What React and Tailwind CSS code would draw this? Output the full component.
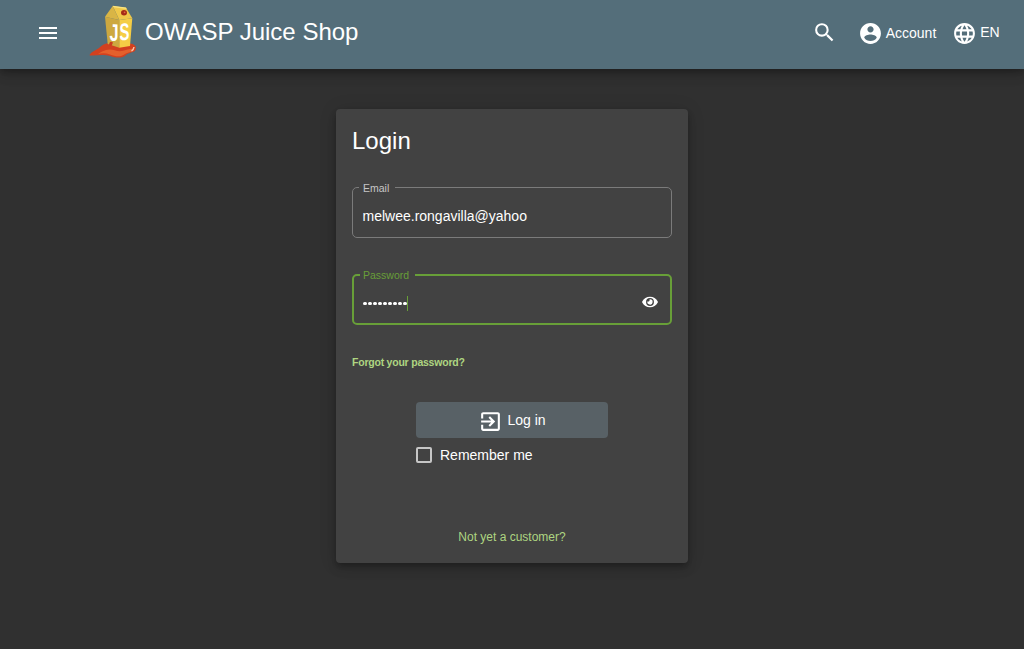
import React from "react";

const MENU = "M3 18h18v-2H3v2zm0-5h18v-2H3v2zm0-7v2h18V6H3z";
const SEARCH = "M15.5 14h-.79l-.28-.27A6.471 6.471 0 0 0 16 9.5 6.5 6.5 0 1 0 9.5 16c1.61 0 3.09-.59 4.23-1.57l.27.28v.79l5 4.99L20.49 19l-4.99-5zm-6 0C7.01 14 5 11.99 5 9.5S7.01 5 9.5 5 14 7.01 14 9.5 11.99 14 9.5 14z";
const ACCOUNT = "M12 2C6.48 2 2 6.48 2 12s4.48 10 10 10 10-4.48 10-10S17.52 2 12 2zm0 3c1.66 0 3 1.34 3 3s-1.34 3-3 3-3-1.34-3-3 1.34-3 3-3zm0 14.2c-2.5 0-4.71-1.28-6-3.22.03-1.99 4-3.08 6-3.08 1.99 0 5.97 1.09 6 3.08-1.29 1.94-3.5 3.22-6 3.22z";
const GLOBE = "M11.99 2C6.47 2 2 6.48 2 12s4.47 10 9.99 10C17.52 22 22 17.52 22 12S17.52 2 11.99 2zm6.93 6h-2.95c-.32-1.25-.78-2.45-1.38-3.56 1.84.63 3.37 1.91 4.33 3.56zM12 4.04c.83 1.2 1.48 2.53 1.91 3.96h-3.82c.43-1.43 1.08-2.76 1.91-3.96zM4.26 14C4.1 13.36 4 12.69 4 12s.1-1.36.26-2h3.38c-.08.66-.14 1.32-.14 2s.06 1.34.14 2H4.26zm.82 2h2.95c.32 1.25.78 2.45 1.38 3.56-1.84-.63-3.37-1.9-4.33-3.56zm2.95-8H5.08c.96-1.66 2.49-2.93 4.33-3.56C8.81 5.55 8.35 6.75 8.03 8zM12 19.96c-.83-1.2-1.48-2.53-1.91-3.96h3.82c-.43 1.43-1.08 2.76-1.91 3.96zM14.34 14H9.66c-.09-.66-.16-1.32-.16-2s.07-1.35.16-2h4.68c.09.65.16 1.32.16 2s-.07 1.34-.16 2zm.25 5.56c.6-1.11 1.06-2.31 1.38-3.56h2.95c-.96 1.65-2.49 2.93-4.33 3.56zM16.36 14c.08-.66.14-1.32.14-2s-.06-1.34-.14-2h3.38c.16.64.26 1.31.26 2s-.1 1.36-.26 2h-3.38z";
const EXIT = "M10.09 15.59L11.5 17l5-5-5-5-1.41 1.41L12.67 11H3v2h9.67l-2.58 2.59zM19 3H5c-1.11 0-2 .9-2 2v4h2V5h14v14H5v-4H3v4c0 1.1.89 2 2 2h14c1.1 0 2-.9 2-2V5c0-1.1-.9-2-2-2z";
const EYE = "M572.52 241.4C518.29 135.59 410.93 64 288 64S57.68 135.64 3.48 241.41a32.35 32.35 0 0 0 0 29.19C57.71 376.41 165.07 448 288 448s230.32-71.64 284.52-177.41a32.35 32.35 0 0 0 0-29.19zM288 400a144 144 0 1 1 144-144 143.93 143.93 0 0 1-144 144zm0-240a95.31 95.31 0 0 0-25.31 3.79 47.85 47.85 0 0 1-66.9 66.9A95.78 95.78 0 1 0 288 160z";

function Icon({ d, className = "size-6", viewBox = "0 0 24 24" }) {
  return (
    <svg viewBox={viewBox} fill="currentColor" className={`shrink-0 ${className}`} aria-hidden="true">
      <path d={d} />
    </svg>
  );
}

function JuiceLogo() {
  return (
    <svg viewBox="0 0 48 54" className="h-[54px] w-12 shrink-0" aria-hidden="true">
      <path d="M0.500 50C3 46 7 45.500 10 43C13 40 16 38.500 20 38L41 38.500C46 39 48 42 46.500 45C45 48 40 47 37 50C33 53.500 28 53 21 51C13 49 7 51 1 50.500Z" fill="#d2401f" />
      <path d="M17 45C23 43 27 47 33 46C38 45 42 43 45 44C44 47 40 47 36 49C31 53 26 51 21 49.500C17 48 13 48 9 49Q13 46 17 45Z" fill="#e4602c" />
      <path d="M42.500 46Q44.500 45 45 42" stroke="#f8c4ab" strokeWidth="1.500" fill="none" />
      <path d="M16 11.700L30.300 15V42.700L18.700 39Z" fill="#cda840" />
      <path d="M30.300 15L43.300 13.300L41 41L30.300 42.700Z" fill="#f5cd45" />
      <path d="M23.700 1L37 2.700L43.300 13.300L30.300 15Z" fill="#efc84a" />
      <path d="M23.700 1L16 11.700L30.300 15Z" fill="#d9b545" />
      <path d="M23.700 0.800L37 2.500L37.700 4L24.500 2.300Z" fill="#fae37f" />
      <ellipse cx="35" cy="7.700" rx="3" ry="2.700" fill="#a52a17" />
      <circle cx="35.600" cy="7.300" r="0.900" fill="#de6642" />
      <path d="M20 40Q20.500 35 24 37.500L22.500 41Z" fill="#cb3d20" />
      <text transform="matrix(0.680 0.040 0 1 20.600 35.500)" fontFamily="Liberation Sans, sans-serif" fontWeight="bold" fontSize="24" fill="#fff">J</text>
      <text transform="matrix(0.620 -0.050 0 1 30.500 35.500)" fontFamily="Liberation Sans, sans-serif" fontWeight="bold" fontSize="24" fill="#fff">S</text>
    </svg>
  );
}

export default function App() {
  return (
    <div className="flex h-screen flex-col overflow-hidden bg-[#303030] font-['Liberation_Sans',Arial,sans-serif] text-sm text-white">
      <header className="z-10 flex h-[69px] shrink-0 items-start bg-[#546e7a] shadow-[0_3px_5px_-1px_rgba(0,0,0,0.2),0_6px_10px_rgba(0,0,0,0.14),0_1px_18px_rgba(0,0,0,0.12)]">
        <button className="mt-[21px] ml-9" aria-label="Open menu"><Icon d={MENU} /></button>
        <div className="mt-[5px] ml-[29px]"><JuiceLogo /></div>
        <h1 className="mt-4 ml-2 text-2xl leading-8 whitespace-nowrap">OWASP Juice Shop</h1>
        <div className="mt-5 ml-auto flex h-6 items-center pr-6">
          <button aria-label="Search"><Icon d={SEARCH} className="size-[25px]" /></button>
          <button className="ml-[21px] flex items-center gap-[2px]">
            <Icon d={ACCOUNT} className="mt-[2px] size-[25px]" />
            <span className="mt-[2px] w-[52px] whitespace-nowrap">Account</span>
          </button>
          <button className="ml-[15px] flex items-center gap-[3px]">
            <Icon d={GLOBE} className="mt-[2px] size-[25px]" />
            <span className="w-5">EN</span>
          </button>
        </div>
      </header>

      <main className="mx-auto mt-10 flex h-[454px] w-[352px] flex-col rounded bg-[#424242] px-4 shadow-[0_3px_5px_-1px_rgba(0,0,0,0.2),0_6px_10px_rgba(0,0,0,0.14),0_1px_18px_rgba(0,0,0,0.12)]">
        <h2 className="mt-4 text-2xl leading-8">Login</h2>

        <fieldset className="mt-6 h-[57px] min-w-0 rounded-[5px] border border-[#7b7b7b] px-[6px]">
          <legend className="h-[13px] w-9 px-1 text-[10.5px] leading-[15px] text-[#c6c6c6]">Email</legend>
          <div className="mt-3 px-[3.5px] leading-5">melwee.rongavilla@yahoo</div>
        </fieldset>

        <fieldset className="mt-[30px] h-[57px] min-w-0 rounded-[5px] border-2 border-[#689f38] px-[6px]">
          <legend className="h-[14px] w-[55px] px-[3px] text-[10.5px] leading-[15px] text-[#689f38]">Password</legend>
          <div className="mt-[11px] flex h-5 items-center pr-[6px] pl-[3px]">
            <span className="flex gap-px" aria-label="Password entered">
              {Array.from({ length: 9 }, (_, i) => (
                <span key={i} className="h-[3px] w-1 rounded-full bg-white" />
              ))}
            </span>
            <span className="h-[15px] w-px bg-[#689f38]" />
            <Icon d={EYE} viewBox="0 0 576 512" className="mb-[2px] ml-auto h-[14px] w-4" />
          </div>
        </fieldset>

        <a className="mt-[29px] w-fit text-[10.5px] leading-4 font-bold tracking-[-0.22px] whitespace-nowrap text-[#aed581]">Forgot your password?</a>

        <div className="mx-16 mt-8">
          <button className="flex h-9 w-full items-center justify-center gap-1 rounded bg-[#586166]">
            <Icon d={EXIT} className="mt-[3px] size-[25px]" />
            <span className="whitespace-nowrap">Log in</span>
          </button>
          <label className="mt-[7px] flex h-5 items-center gap-2">
            <span className="size-4 rounded-[2px] border-2 border-[#c6c6c6]" />
            <span>Remember me</span>
          </label>
        </div>

        <a className="mt-auto mb-4 text-center text-xs leading-5 text-[#aed581]">Not yet a customer?</a>
      </main>
    </div>
  );
}
